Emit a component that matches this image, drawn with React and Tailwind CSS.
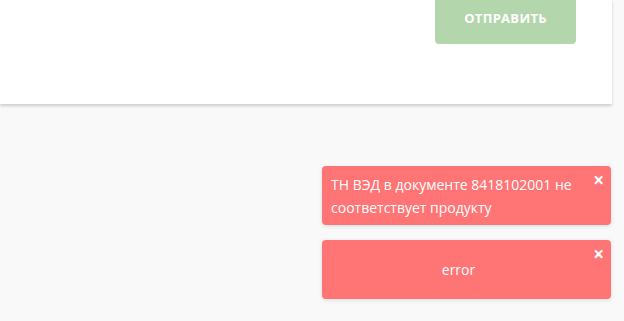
import React from 'react';

function Toast({ children, center }) {
  return (
    <div className="relative w-[289px] h-[59px] rounded-[4px] bg-[#ff7474] text-white shadow-[0_1px_4px_rgba(0,0,0,0.12)]">
      <button className="absolute right-[7px] top-[5px] text-[19px] font-bold leading-none text-white">×</button>
      {center ? (
        <div className="flex h-full items-center justify-center pr-[16px] text-[14px]">{children}</div>
      ) : (
        <div className="pl-[9px] pr-[28px] pt-[7px] text-[14px] leading-[23px]">{children}</div>
      )}
    </div>
  );
}

export default function App() {
  return (
    <div className="relative h-[321px] w-[624px] overflow-hidden bg-[#f9f9f9] font-['Open_Sans',sans-serif]">
      <div className="h-[104px] w-[612px] bg-white shadow-[0_2px_3px_rgba(0,0,0,0.18)]">
        <div className="flex justify-end pr-[36px]">
          <button className="flex h-[44px] w-[141px] items-center justify-center rounded-b-[4px] bg-[#b3d6ad] pb-[6px] text-[13px] font-bold tracking-[0.3px] text-white">
            ОТПРАВИТЬ
          </button>
        </div>
      </div>
      <div className="absolute left-[322px] top-[166px] flex flex-col gap-[15px]">
        <Toast>ТН ВЭД в документе 8418102001 не соответствует продукту</Toast>
        <Toast center>error</Toast>
      </div>
    </div>
  );
}
